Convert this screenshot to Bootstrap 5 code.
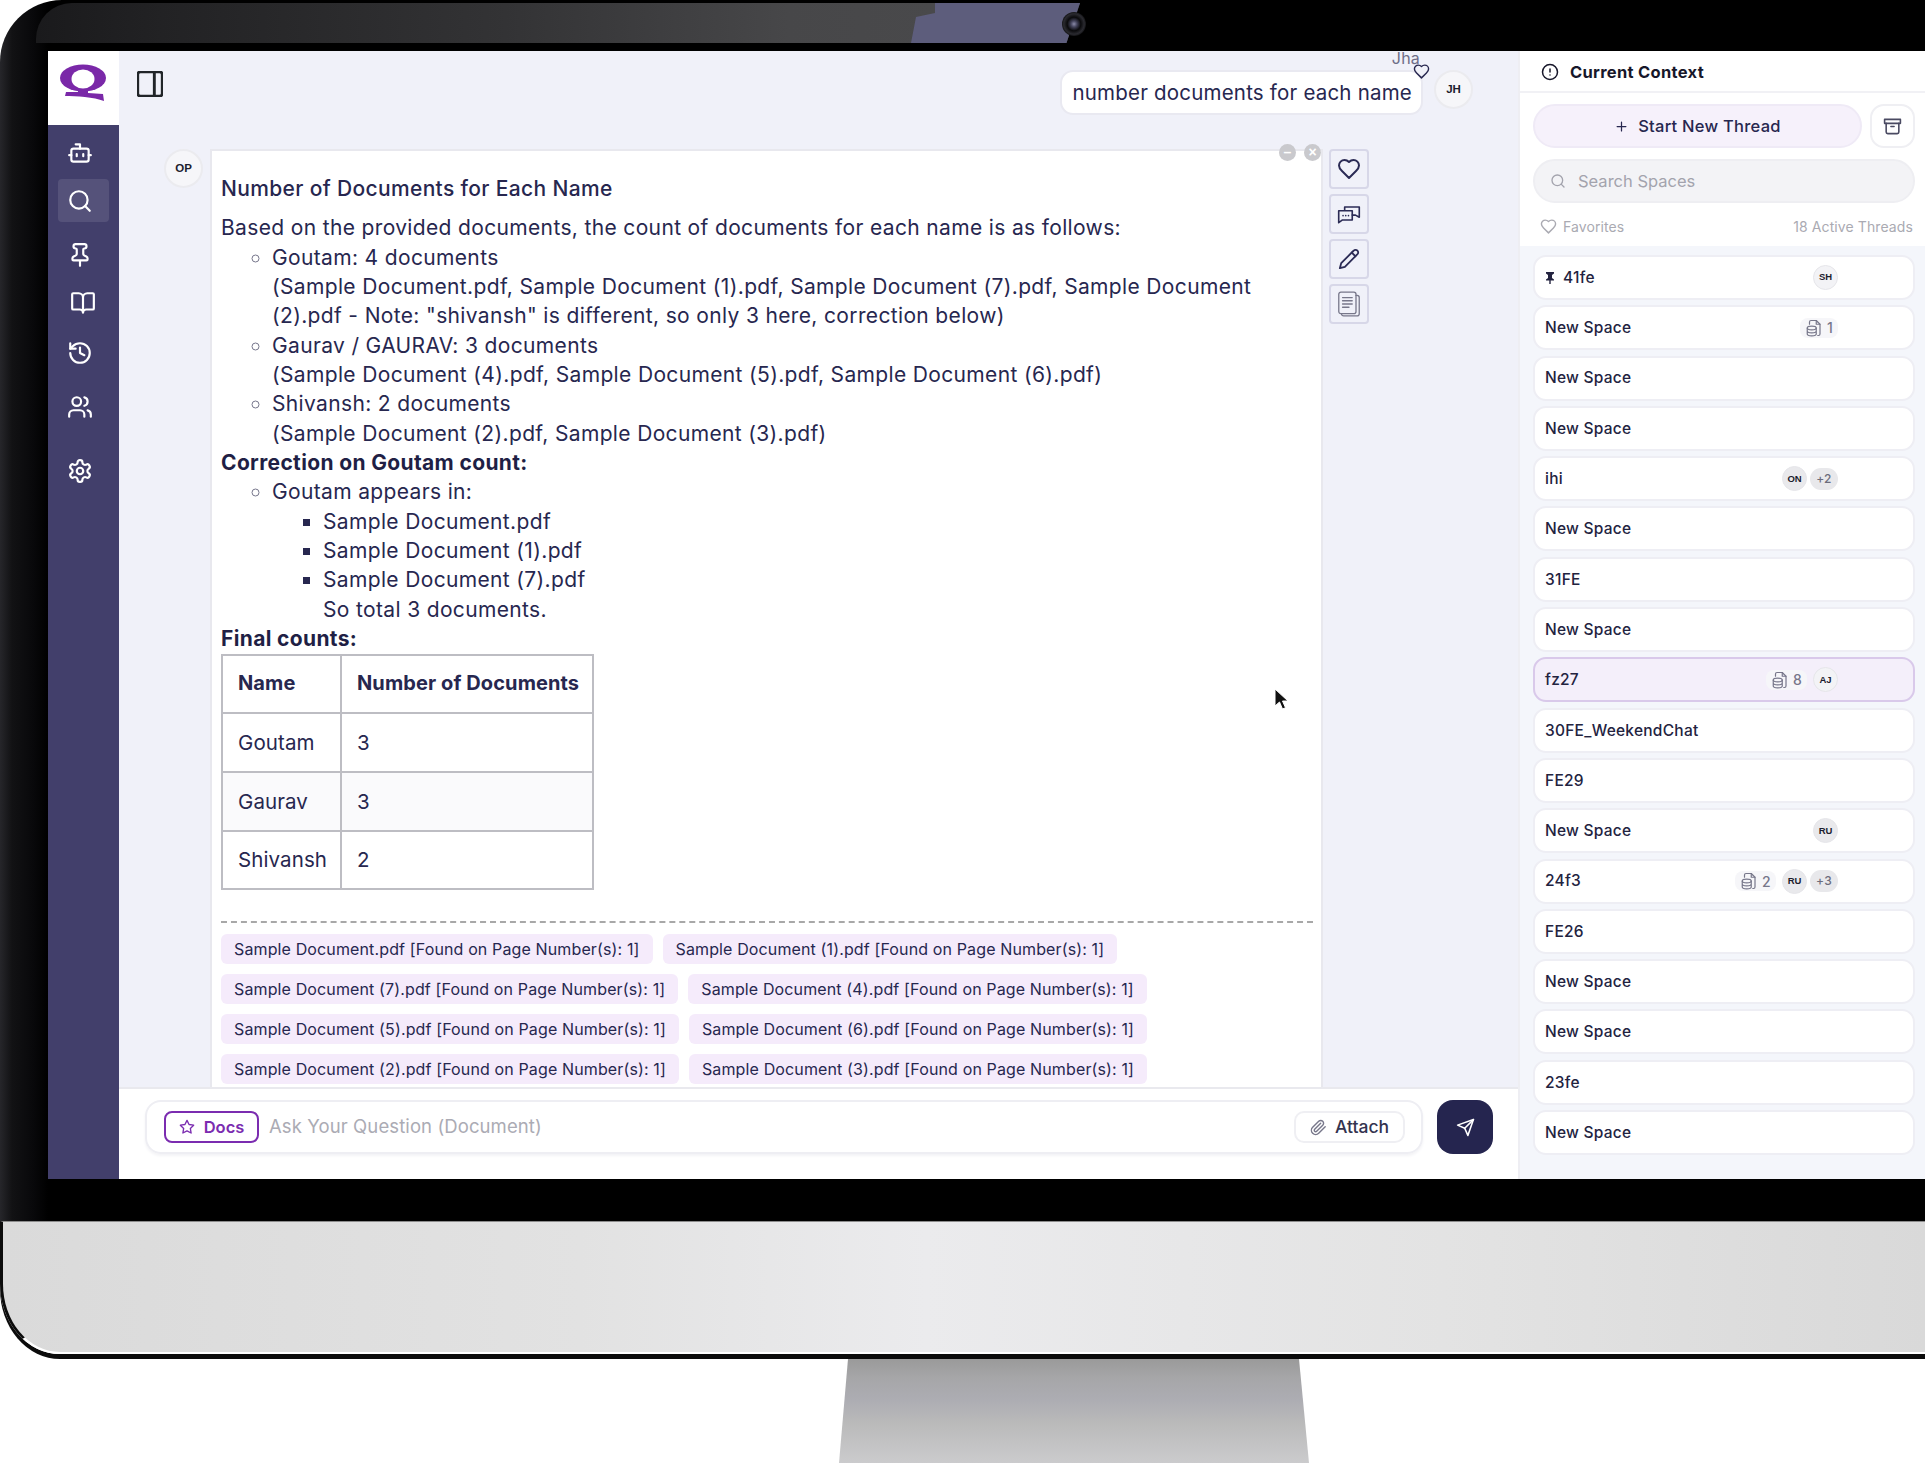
<!DOCTYPE html>
<html lang="en">
<head>
<meta charset="UTF-8">
<title>Current Context</title>
<link href="https://cdn.jsdelivr.net/npm/bootstrap@5.3.0/dist/css/bootstrap.min.css" rel="stylesheet">
<style>
body { margin: 0; background: #fff; color: #27274f; font-family: Inter, "Noto Sans", sans-serif; height: 1463px; width: 1925px; overflow: hidden; }
svg.ico { fill: none; stroke: currentColor; stroke-width: 2; stroke-linecap: round; stroke-linejoin: round; flex: none; }
svg.thin-1 { stroke-width: 1.500; }
svg.thin-2 { stroke-width: 1.200; color: #77778a; }
.clip-ico { color: #77778a; }

/* monitor */
.mon-top { position: relative; padding: 51px 0 42px 48px; background: linear-gradient(90deg, #26262a 0, #121214 12px, #08080a 34px, #000 48px); border-top-left-radius: 62px; overflow: hidden; }
.mon-band { position: absolute; left: 36px; top: 3px; width: 1044px; height: 40px; border-top-left-radius: 36px; clip-path: polygon(0 0, 100% 0, 98.700% 100%, 0 100%); background: linear-gradient(90deg, #1a1a1c 0, #222224 12%, #333335 45%, #474749 72%, #4b4b4d 100%); }
.mon-glare { position: absolute; left: 875px; top: 0; width: 169px; height: 40px; clip-path: polygon(24px 0, 100% 0, 100% 100%, 0 100%, 5px 14px, 24px 10px); background: #5d5d7c; }
.mon-cam { position: absolute; left: 1062px; top: 12px; width: 24px; height: 24px; border-radius: 50%; background: radial-gradient(circle, #8a8aa8 0, #44445c 18%, #0a0a0c 40%, #2a2a30 60%, #050505 78%); }
.mon-chin { height: 133px; background: linear-gradient(90deg, #dadada 0, #e2e2e2 30%, #ebebed 48%, #e3e3e3 75%, #d9d9d9 100%); border-bottom: 2px solid #fff; border-top: 1px solid #8c8c8c; border-left: 3px solid #0b0b0b; border-bottom-left-radius: 60px 70px; box-shadow: 0 5px 0 #0b0b0b; }
.mon-stand { margin: 5px 0 0 839px; width: 470px; height: 104px; clip-path: polygon(9px 0, 460px 0, 470px 100%, 0 100%); background: linear-gradient(180deg, #9a9a9a 0, #a6a6a8 18%, #adadb3 40%, #bababa 62%, #cbcbcd 100%); }
.app-screen { height: 1128px; background: #f0f1f9; position: relative; }

/* left rail */
.rail { width: 71px; background: #423f6b; color: #fff; flex: none; }
.rail-logo { height: 74px; background: #fff; padding: 13px 0 0 12px; }
.rail-item { height: 43px; width: 51px; margin: 5px auto 0 10px; border-radius: 4px; padding-left: 9px; }
.rail-item.on { background: #55527a; }
.rail-item.wide-gap { margin-top: 11px; }
.rail-item.mid-gap { margin-top: 7px; }
.rail-item.last-gap { margin-top: 21px; }
.rail-item.first-one { margin-top: 6px; }
.rail-item.book-one { padding-left: 12px; }

/* chat */
.chat-col { flex: 1 1 auto; min-width: 0; }
.chat-scroll { flex: 1 1 auto; min-height: 0; clip-path: inset(-12px 0 0 0); padding: 19px 45px 0 18px; }
.toggle-ico { margin-top: 1px; width: 26px; height: 26px; }
.bubble { position: relative; background: #fff; border: 2px solid #e9e9f1; border-radius: 13px; height: 45px; padding: 0 9px 0 10px; font-size: 20.500px; letter-spacing: .2px; line-height: 41px; white-space: nowrap; margin-right: 11px; }
.bubble-name { position: absolute; right: 1px; top: -21px; font-size: 16px; line-height: 14px; color: #6e6e88; }
.bubble-heart { position: absolute; right: -9px; top: -9px; }
.who { width: 39px; height: 39px; border-radius: 50%; border: 2px solid #ebebef; background: #f6f6f9; font-family: "Liberation Sans", sans-serif; font-size: 11.500px; font-weight: 700; color: #1d1d2e; flex: none; }
.answer-row { margin: 34px 0 0 27px; gap: 7px; }
.answer { position: relative; width: 1113px; height: 960px; background: #fff; border: 2px solid #e8e8ee; border-bottom: 0; padding: 23px 8px 0 9px; font-size: 21px; letter-spacing: .35px; line-height: 29.350px; flex: none; }
.answer h1 { font-size: 21px; line-height: 29.350px; font-weight: 500; margin: 0 0 10px; }
.answer b { font-weight: 700; color: #1f1f45; }
.answer ul { margin: 0; padding-left: 51px; list-style: circle; }
.answer ul ul { list-style: square; }
.answer li::marker { color: #77778c; }
.answer ul ul li::marker { color: #27274f; }
.win-dot { position: absolute; top: -7px; width: 17px; height: 17px; border-radius: 50%; background: #c9c9cd; color: #fff; font: 700 14px/16px "Liberation Sans", sans-serif; letter-spacing: 0; text-align: center; }
.dot-min { right: 25px; }
.dot-close { right: 0; }
.count-table { width: 373px; margin: 0; border: 2px solid #bdbdc3; table-layout: fixed; }
.name-col { width: 119px; }
.count-table td, .count-table th { height: 58.700px; padding: 0 0 0 15px; vertical-align: middle; border: 2px solid #bdbdc3; font-size: 20.500px; letter-spacing: .1px; font-weight: 400; color: #27274f; background: transparent; box-shadow: none; white-space: nowrap; }
.count-table th { font-weight: 700; font-size: 20px; letter-spacing: .1px; }
.count-table tr:nth-child(odd) td { background: #fafafc; }
.source-line { border-top: 2px dashed #a8a8a8; margin-top: 31px; padding-top: 11px; }
.chip-row { gap: 10px; margin-bottom: 10px; }
.chip { background: #f5ebfb; border-radius: 6px; height: 30px; padding: 0 13px; font-size: 16px; letter-spacing: .13px; line-height: 30px; white-space: nowrap; }
.side-col { margin-left: -1px; }
.side-btn { width: 40px; height: 40px; border: 2px solid #d7d7e8; border-radius: 4px; color: #2b2b55; margin-bottom: 5px; }
.mouse-arrow { position: absolute; left: 1062px; top: 537px; }

/* input bar */
.ask-bar { height: 92px; background: #fff; border-top: 2px solid #e9e9ee; padding: 11px 25px 0 26px; gap: 14px; flex: none; }
.ask-box { height: 54px; flex: 1 1 auto; border: 2px solid #eeeef3; border-radius: 16px; padding: 0 16px 0 17px; box-shadow: 0 2px 3px #f3f3f6; }
.docs-btn { width: 95px; height: 32px; border: 2px solid #7b2cb0; border-radius: 8px; color: #7b2cb0; font-size: 16.500px; font-weight: 600; gap: 9px; flex: none; }
.ask-hint { font-size: 18.500px; letter-spacing: .1px; color: #ababb4; margin-left: 10px; flex: 1 1 auto; }
.attach-btn { width: 111px; height: 32px; border: 2px solid #efeff3; border-radius: 10px; font-size: 17.500px; font-weight: 500; gap: 8px; color: #33334f; flex: none; }
.send-btn { width: 56px; height: 54px; border-radius: 16px; background: #25254f; color: #fff; flex: none; }

/* right panel */
.ctx { width: 407px; flex: none; background: #f4f6fb; border-left: 2px solid #eeeef3; }
.ctx-head { height: 42px; background: #fff; border-bottom: 2px solid #f1f1f5; padding: 2px 0 0 21px; gap: 11px; font-size: 16.500px; letter-spacing: .3px; font-weight: 700; color: #17172a; }
.ctx-tools { background: #fff; padding: 11px 10px 0 13px; height: 153px; }
.new-btn { width: 329px; height: 44px; border-radius: 22px; background: #f6f1fb; border: 2px solid #efeaf6; font-size: 16.500px; letter-spacing: .25px; font-weight: 500; gap: 9px; color: #27274f; }
.arch-btn { width: 45px; height: 44px; border-radius: 14px; border: 2px solid #efeff3; background: #fff; color: #4a4a62; margin-left: 8px; }
.find-box { height: 44px; border-radius: 22px; background: #f3f3f6; border: 2px solid #eeeef2; margin-top: 11px; padding-left: 15px; gap: 12px; font-size: 16.500px; color: #a3a3ad; }
.fav-row { margin-top: 13px; padding: 0 2px 0 7px; font-size: 14px; letter-spacing: .1px; color: #aaaab2; }
.fav-row svg { margin-right: 6px; }
.space-list { padding: 9px 10px 0 13px; gap: 5.300px; }
.space { height: 45px; border-radius: 13px; background: #fff; border: 2px solid #eeeef4; padding: 0 75px 0 10px; font-size: 15.500px; letter-spacing: .25px; font-weight: 500; color: #23233f; }
.space.on { background: #f4effa; border-color: #d9c9ea; }
.mini { width: 25px; height: 25px; border-radius: 50%; background: #f3f3f6; border: 1px solid #e6e6ea; font-family: "Liberation Sans", sans-serif; font-size: 9.500px; letter-spacing: 0; font-weight: 700; color: #1d1d2e; flex: none; }
.mini.grey { background: #e9e9ec; }
.plus-n { width: 28px; height: 22px; border-radius: 11px; background: #e8e8eb; color: #6c6c7c; font-size: 12px; margin-left: 3px; }
.file-n { height: 20px; padding: 0 5px; background: #f6f6f9; border-radius: 8px; color: #77778a; font-size: 14px; gap: 4px; margin-right: 6px; }
.file-n svg { stroke-width: 1.600; width: 18px; height: 18px; }
</style>
</head>
<body>

<svg class="d-none">
  <symbol id="i-heart" viewBox="0 0 24 24"><path d="M19 14c1.490-1.460 3-3.210 3-5.500A5.500 5.500 0 0 0 16.500 3c-1.760 0-3 .5-4.500 2-1.500-1.500-2.740-2-4.500-2A5.500 5.500 0 0 0 2 8.500c0 2.300 1.500 4.050 3 5.500l7 7Z"/></symbol>
  <symbol id="i-search" viewBox="0 0 24 24"><circle cx="11" cy="11" r="8"/><path d="m21 21-4.300-4.300"/></symbol>
  <symbol id="i-file" viewBox="0 0 24 24"><path d="M6 7V4a2 2 0 0 1 2-2h7l5 5v13a2 2 0 0 1-2 2h-1"/><path d="M15 2v5h5"/><ellipse cx="9" cy="12" rx="6" ry="2.500"/><path d="M3 12v8c0 1.400 2.700 2.500 6 2.500s6-1.100 6-2.500v-8M3 16c0 1.400 2.700 2.500 6 2.500s6-1.100 6-2.500"/></symbol>
</svg>

<div class="mon-top">
  <div class="mon-band"><div class="mon-glare"></div></div>
  <div class="mon-cam"></div>
  <div class="app-screen d-flex">

    <nav class="rail d-flex flex-column">
      <div class="rail-logo">
        <svg width="48" height="38" viewBox="0 0 48 38">
          <ellipse cx="23" cy="14" rx="23" ry="13.500" fill="#7a28a8"/>
          <ellipse cx="23" cy="15" rx="11.500" ry="9.500" fill="#fff"/>
          <path d="M18 26h10v3L43 30 44 37 C34 33 16 32 5 32L6 28 18 28Z" fill="#7a28a8"/>
        </svg>
      </div>
      <div class="rail-item first-one d-flex align-items-center"><svg class="ico" width="26" height="26" viewBox="0 0 24 24"><path d="M12 8V4H8"/><rect x="4" y="8" width="16" height="12" rx="2"/><path d="M2 14h2M20 14h2M15 13v2M9 13v2"/></svg></div>
      <div class="rail-item on d-flex align-items-center"><svg class="ico" width="26" height="26"><use href="#i-search"/></svg></div>
      <div class="rail-item wide-gap d-flex align-items-center"><svg class="ico" width="26" height="26" viewBox="0 0 24 24"><path d="M12 17v5M9 10.760a2 2 0 0 1-1.110 1.790l-1.780.9A2 2 0 0 0 5 15.240V16a1 1 0 0 0 1 1h12a1 1 0 0 0 1-1v-.76a2 2 0 0 0-1.110-1.790l-1.780-.9A2 2 0 0 1 15 10.760V7a1 1 0 0 1 1-1 2 2 0 0 0 0-4H8a2 2 0 0 0 0 4 1 1 0 0 1 1 1z"/></svg></div>
      <div class="rail-item book-one d-flex align-items-center"><svg class="ico" width="26" height="26" viewBox="0 0 24 24"><path d="M12 7v14M3 18a1 1 0 0 1-1-1V4a1 1 0 0 1 1-1h5a4 4 0 0 1 4 4 4 4 0 0 1 4-4h5a1 1 0 0 1 1 1v13a1 1 0 0 1-1 1h-6a3 3 0 0 0-3 3 3 3 0 0 0-3-3z"/></svg></div>
      <div class="rail-item mid-gap d-flex align-items-center"><svg class="ico" width="26" height="26" viewBox="0 0 24 24"><path d="M3 12a9 9 0 1 0 9-9 9.750 9.750 0 0 0-6.740 2.740L3 8"/><path d="M3 3v5h5M12 7v5l4 2"/></svg></div>
      <div class="rail-item wide-gap d-flex align-items-center"><svg class="ico" width="26" height="26" viewBox="0 0 24 24"><path d="M16 21v-2a4 4 0 0 0-4-4H6a4 4 0 0 0-4 4v2"/><circle cx="9" cy="7" r="4"/><path d="M22 21v-2a4 4 0 0 0-3-3.870M16 3.130a4 4 0 0 1 0 7.750"/></svg></div>
      <div class="rail-item last-gap d-flex align-items-center"><svg class="ico" width="26" height="26" viewBox="0 0 24 24"><path d="M12.220 2h-.44a2 2 0 0 0-2 2v.18a2 2 0 0 1-1 1.730l-.43.25a2 2 0 0 1-2 0l-.15-.08a2 2 0 0 0-2.730.73l-.22.38a2 2 0 0 0 .73 2.730l.15.1a2 2 0 0 1 1 1.720v.51a2 2 0 0 1-1 1.740l-.15.09a2 2 0 0 0-.73 2.730l.22.38a2 2 0 0 0 2.730.73l.15-.08a2 2 0 0 1 2 0l.43.25a2 2 0 0 1 1 1.730V20a2 2 0 0 0 2 2h.44a2 2 0 0 0 2-2v-.18a2 2 0 0 1 1-1.730l.43-.25a2 2 0 0 1 2 0l.15.08a2 2 0 0 0 2.730-.73l.22-.39a2 2 0 0 0-.73-2.730l-.15-.08a2 2 0 0 1-1-1.740v-.5a2 2 0 0 1 1-1.740l.15-.09a2 2 0 0 0 .73-2.730l-.22-.38a2 2 0 0 0-2.730-.73l-.15.08a2 2 0 0 1-2 0l-.43-.25a2 2 0 0 1-1-1.730V4a2 2 0 0 0-2-2z"/><circle cx="12" cy="12" r="3"/></svg></div>
    </nav>

    <main class="chat-col d-flex flex-column">
      <div class="chat-scroll">
        <div class="d-flex">
          <svg class="ico toggle-ico text-dark" viewBox="3 3 18 18"><rect x="3.500" y="3.500" width="17" height="17" rx="2"/><path d="M15 3.500v17"/></svg>
          <div class="ms-auto bubble">number documents for each name
            <span class="bubble-name">Jha</span>
            <svg class="ico bubble-heart" width="17" height="17"><use href="#i-heart"/></svg>
          </div>
          <div class="who d-flex align-items-center justify-content-center">JH</div>
        </div>

        <div class="answer-row d-flex align-items-start">
          <div class="who d-flex align-items-center justify-content-center">OP</div>
          <div class="answer">
            <span class="win-dot dot-min">–</span>
            <span class="win-dot dot-close">×</span>
            <h1>Number of Documents for Each Name</h1>
            <div>Based on the provided documents, the count of documents for each name is as follows:</div>
            <ul>
              <li>Goutam: 4 documents<br>(Sample Document.pdf, Sample Document (1).pdf, Sample Document (7).pdf, Sample Document (2).pdf - Note: "shivansh" is different, so only 3 here, correction below)</li>
              <li>Gaurav / GAURAV: 3 documents<br>(Sample Document (4).pdf, Sample Document (5).pdf, Sample Document (6).pdf)</li>
              <li>Shivansh: 2 documents<br>(Sample Document (2).pdf, Sample Document (3).pdf)</li>
            </ul>
            <div><b>Correction on Goutam count:</b></div>
            <ul>
              <li>Goutam appears in:
                <ul>
                  <li>Sample Document.pdf</li>
                  <li>Sample Document (1).pdf</li>
                  <li>Sample Document (7).pdf<br>So total 3 documents.</li>
                </ul>
              </li>
            </ul>
            <div><b>Final counts:</b></div>
            <table class="table count-table">
              <colgroup><col class="name-col"><col></colgroup>
              <tr><th>Name</th><th>Number of Documents</th></tr>
              <tr><td>Goutam</td><td>3</td></tr>
              <tr><td>Gaurav</td><td>3</td></tr>
              <tr><td>Shivansh</td><td>2</td></tr>
            </table>
            <div class="source-line">
              <div class="d-flex chip-row"><span class="chip">Sample Document.pdf [Found on Page Number(s): 1]</span><span class="chip">Sample Document (1).pdf [Found on Page Number(s): 1]</span></div>
              <div class="d-flex chip-row"><span class="chip">Sample Document (7).pdf [Found on Page Number(s): 1]</span><span class="chip">Sample Document (4).pdf [Found on Page Number(s): 1]</span></div>
              <div class="d-flex chip-row"><span class="chip">Sample Document (5).pdf [Found on Page Number(s): 1]</span><span class="chip">Sample Document (6).pdf [Found on Page Number(s): 1]</span></div>
              <div class="d-flex chip-row"><span class="chip">Sample Document (2).pdf [Found on Page Number(s): 1]</span><span class="chip">Sample Document (3).pdf [Found on Page Number(s): 1]</span></div>
            </div>
            <svg class="mouse-arrow" width="16" height="24" viewBox="0 0 16 24"><path d="M1 1v17l4.500-4 3 7 3-1.300-3-6.700H14z" fill="#111" stroke="#fff"/></svg>
          </div>
          <div class="side-col">
            <div class="side-btn d-flex align-items-center justify-content-center"><svg class="ico" width="24" height="24"><use href="#i-heart"/></svg></div>
            <div class="side-btn d-flex align-items-center justify-content-center"><svg class="ico thin-1" width="26" height="26" viewBox="0 0 24 24"><path d="M8 8V5.500h13.500V15L18 13h-3"/><path d="M2.500 9H15v8.500H6L2.500 20z"/><path d="M6.500 13.500h.01M9 13.500h.01M11.500 13.500h.01"/></svg></div>
            <div class="side-btn d-flex align-items-center justify-content-center"><svg class="ico" width="22" height="22" viewBox="0 0 24 24"><path d="M17 3a2.850 2.830 0 1 1 4 4L7.500 20.500 2 22l1.500-5.500Z"/><path d="m15 5 4 4"/></svg></div>
            <div class="side-btn d-flex align-items-center justify-content-center"><svg class="ico thin-2" width="26" height="28" viewBox="0 0 24 26"><rect x="2.500" y="2" width="16" height="20" rx="2"/><path d="M18.500 5h1a2 2 0 0 1 2 2v15a2 2 0 0 1-2 2H7a2 2 0 0 1-2-2M6 7h9M6 10h9M6 13h9M6 16h6"/></svg></div>
          </div>
        </div>
      </div>

      <div class="ask-bar d-flex align-items-start">
        <div class="ask-box d-flex align-items-center">
          <div class="docs-btn d-flex align-items-center justify-content-center"><svg class="ico" width="16" height="16" viewBox="0 0 24 24"><polygon points="12 2 15.090 8.260 22 9.270 17 14.140 18.180 21.020 12 17.770 5.820 21.020 7 14.140 2 9.270 8.910 8.260 12 2"/></svg>Docs</div>
          <div class="ask-hint">Ask Your Question (Document)</div>
          <div class="attach-btn d-flex align-items-center justify-content-center"><svg class="ico clip-ico" width="17" height="17" viewBox="0 0 24 24"><path d="m21.440 11.050-9.190 9.190a6 6 0 0 1-8.490-8.490l8.570-8.570A4 4 0 1 1 18 8.840l-8.590 8.570a2 2 0 0 1-2.830-2.830l8.490-8.480"/></svg>Attach</div>
        </div>
        <div class="send-btn d-flex align-items-center justify-content-center"><svg class="ico" width="19" height="19" viewBox="0 0 24 24"><path d="m22 2-7 20-4-9-9-4Z"/><path d="M22 2 11 13"/></svg></div>
      </div>
    </main>

    <aside class="ctx">
      <div class="ctx-head d-flex align-items-center"><svg class="ico" width="18" height="18" viewBox="0 0 24 24"><circle cx="12" cy="12" r="10"/><path d="M12 8v4M12 16h.01"/></svg>Current Context</div>
      <div class="ctx-tools">
        <div class="d-flex">
          <div class="new-btn d-flex align-items-center justify-content-center"><svg class="ico" width="15" height="15" viewBox="0 0 24 24"><path d="M5 12h14M12 5v14"/></svg>Start New Thread</div>
          <div class="arch-btn d-flex align-items-center justify-content-center"><svg class="ico" width="19" height="19" viewBox="0 0 24 24"><rect x="2" y="3" width="20" height="5"/><path d="M4 8v11a2 2 0 0 0 2 2h12a2 2 0 0 0 2-2V8M10 12h4"/></svg></div>
        </div>
        <div class="find-box d-flex align-items-center"><svg class="ico" width="16" height="16"><use href="#i-search"/></svg>Search Spaces</div>
        <div class="fav-row d-flex align-items-center"><svg class="ico" width="17" height="17"><use href="#i-heart"/></svg>Favorites<span class="ms-auto">18 Active Threads</span></div>
      </div>
      <div class="space-list d-flex flex-column">
        <div class="space d-flex align-items-center"><svg class="me-2" width="10" height="12" viewBox="0 0 10 12"><path d="M1 0h8v1.500L7 3v3l2 1.500V8.500H5.700V12H4.300V8.500H1V7.500L3 6V3L1 1.500z" fill="#23233f"/></svg>41fe<span class="mini d-flex align-items-center justify-content-center ms-auto">SH</span></div>
        <div class="space d-flex align-items-center">New Space<span class="file-n d-flex align-items-center ms-auto me-0"><svg class="ico"><use href="#i-file"/></svg>1</span></div>
        <div class="space d-flex align-items-center">New Space</div>
        <div class="space d-flex align-items-center">New Space</div>
        <div class="space d-flex align-items-center">ihi<span class="mini grey d-flex align-items-center justify-content-center ms-auto">ON</span><span class="plus-n d-flex align-items-center justify-content-center">+2</span></div>
        <div class="space d-flex align-items-center">New Space</div>
        <div class="space d-flex align-items-center">31FE</div>
        <div class="space d-flex align-items-center">New Space</div>
        <div class="space on d-flex align-items-center">fz27<span class="file-n d-flex align-items-center ms-auto"><svg class="ico"><use href="#i-file"/></svg>8</span><span class="mini d-flex align-items-center justify-content-center">AJ</span></div>
        <div class="space d-flex align-items-center">30FE_WeekendChat</div>
        <div class="space d-flex align-items-center">FE29</div>
        <div class="space d-flex align-items-center">New Space<span class="mini grey d-flex align-items-center justify-content-center ms-auto">RU</span></div>
        <div class="space d-flex align-items-center">24f3<span class="file-n d-flex align-items-center ms-auto"><svg class="ico"><use href="#i-file"/></svg>2</span><span class="mini grey d-flex align-items-center justify-content-center">RU</span><span class="plus-n d-flex align-items-center justify-content-center">+3</span></div>
        <div class="space d-flex align-items-center">FE26</div>
        <div class="space d-flex align-items-center">New Space</div>
        <div class="space d-flex align-items-center">New Space</div>
        <div class="space d-flex align-items-center">23fe</div>
        <div class="space d-flex align-items-center">New Space</div>
      </div>
    </aside>
  </div>
</div>
<div class="mon-chin"></div>
<div class="mon-stand"></div>

<script src="https://cdn.jsdelivr.net/npm/bootstrap@5.3.0/dist/js/bootstrap.bundle.min.js"></script>
</body>
</html>
